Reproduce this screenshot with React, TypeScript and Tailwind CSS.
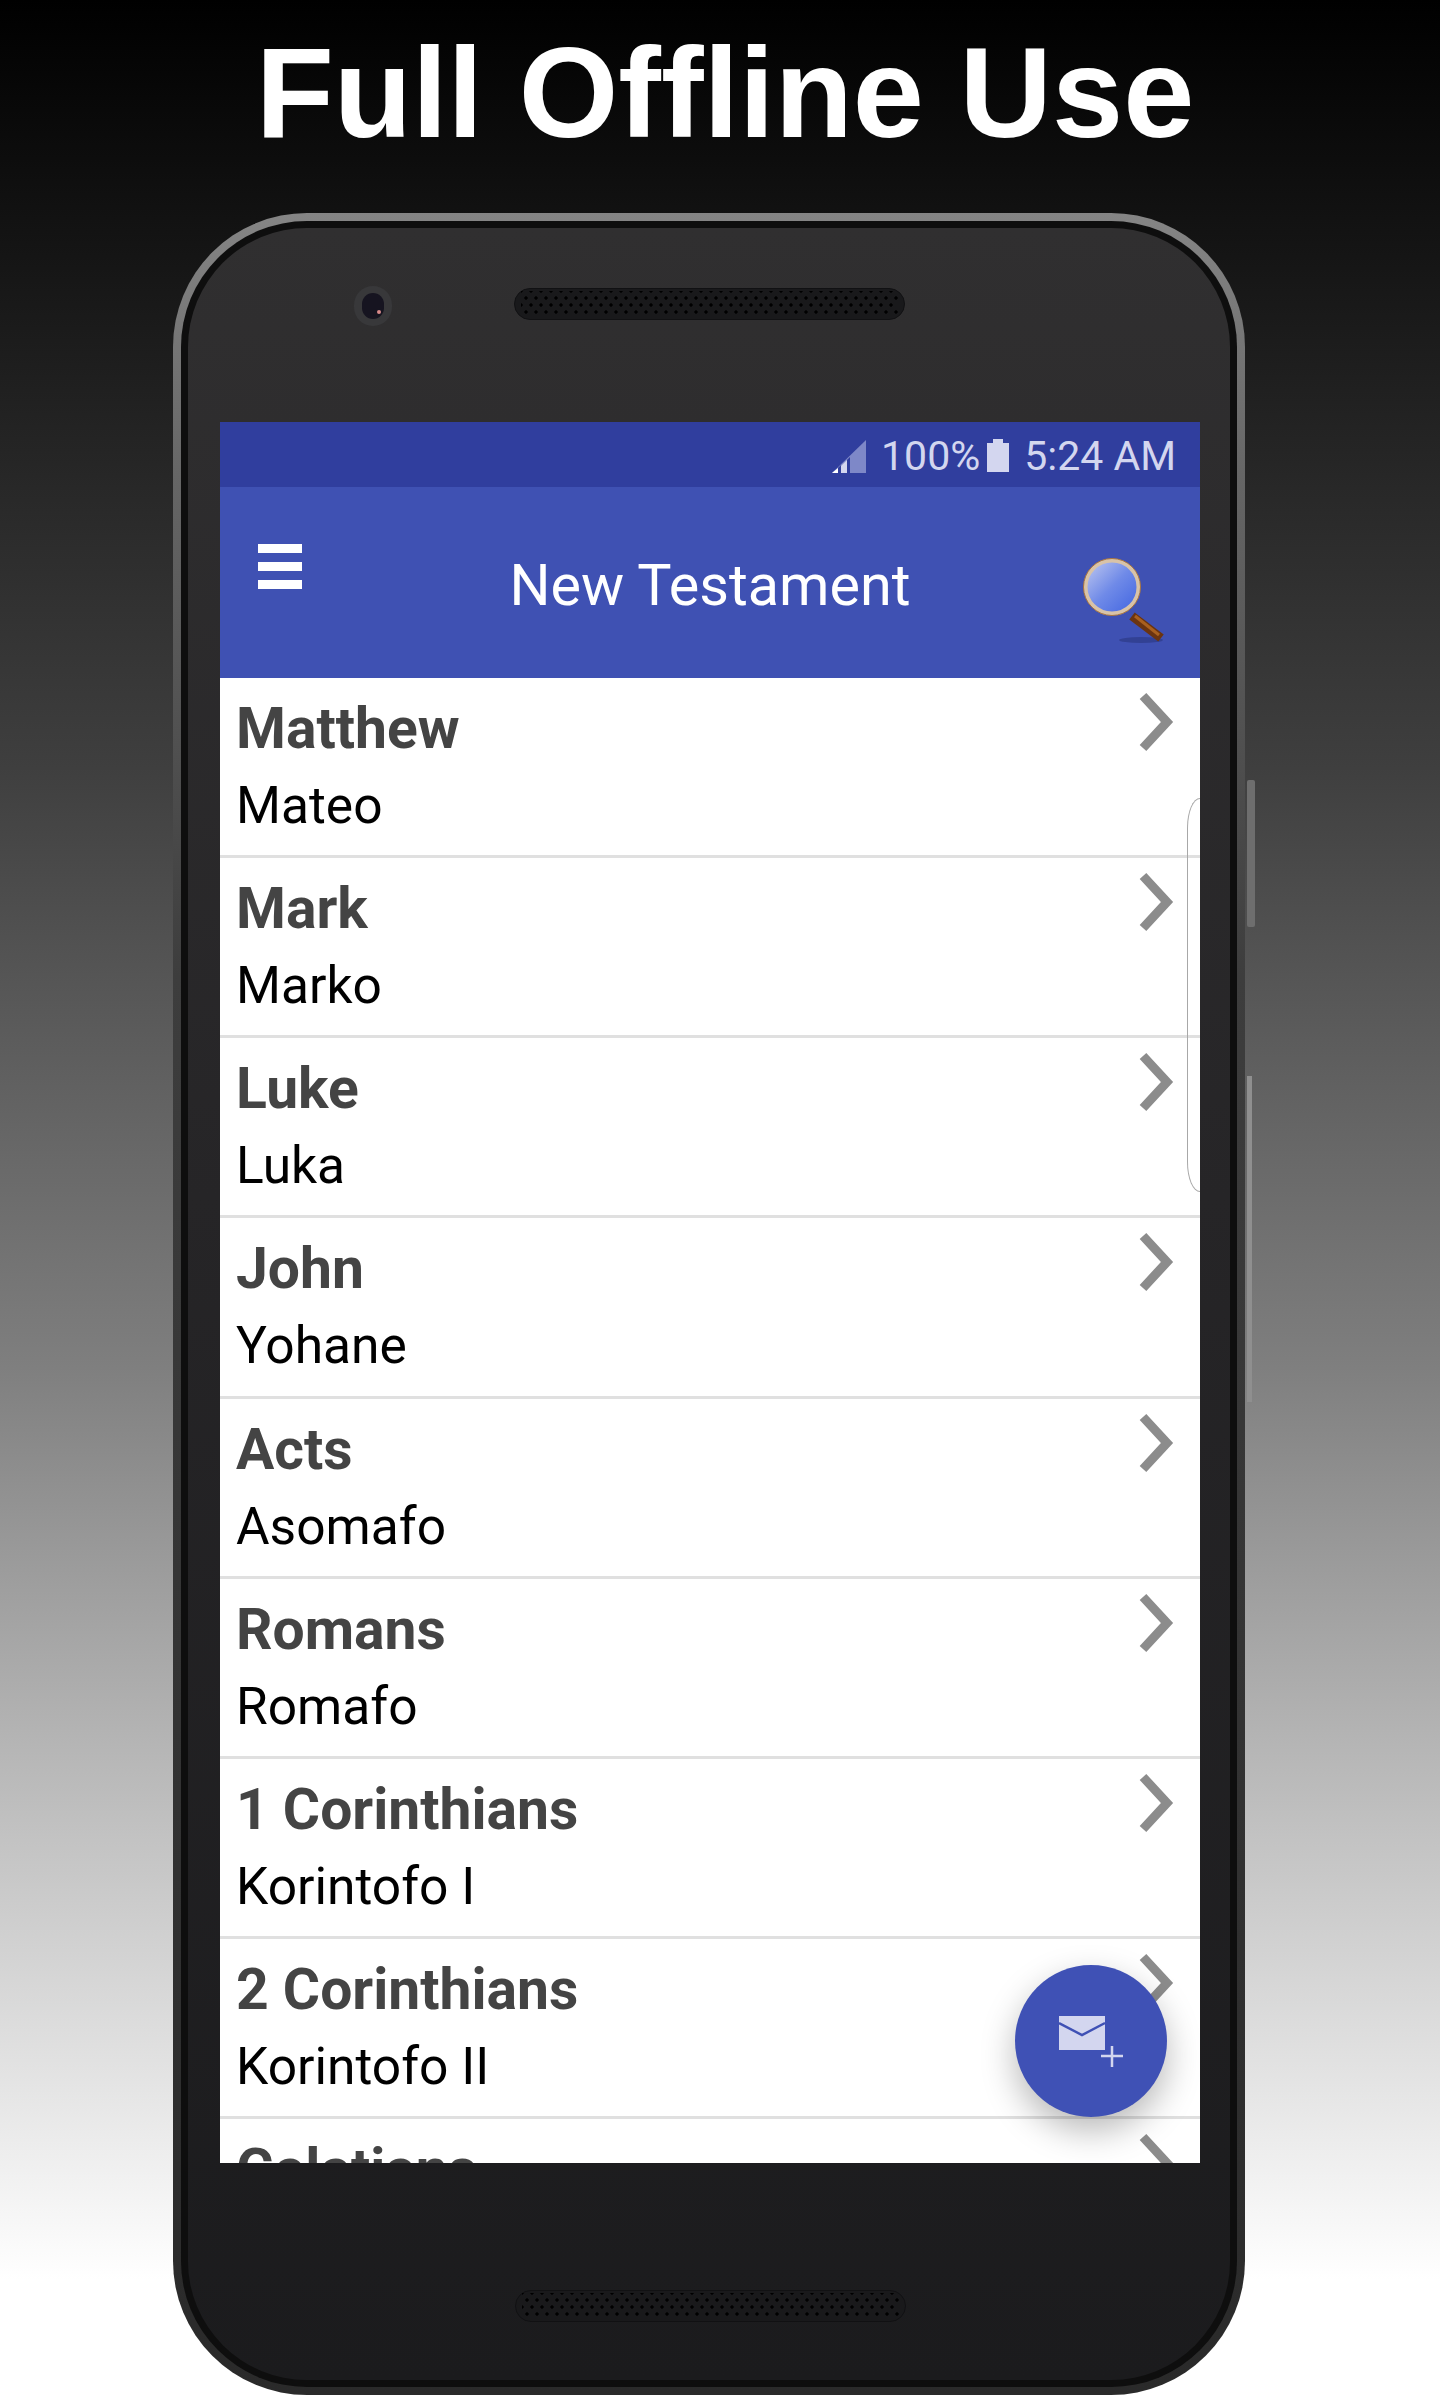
const books = [
  { en: 'Matthew', local: 'Mateo' },
  { en: 'Mark', local: 'Marko' },
  { en: 'Luke', local: 'Luka' },
  { en: 'John', local: 'Yohane' },
  { en: 'Acts', local: 'Asomafo' },
  { en: 'Romans', local: 'Romafo' },
  { en: '1 Corinthians', local: 'Korintofo I' },
  { en: '2 Corinthians', local: 'Korintofo II' },
  { en: 'Galatians', local: '' },
];

const Speaker = () => (
  <div className="w-[391px] h-[32px] rounded-full bg-[#19191b] border border-[#111113] px-[6px] py-[2px]">
    <div className="w-full h-full bg-[radial-gradient(circle,#000_1.4px,transparent_1.9px),radial-gradient(circle,#000_1.4px,transparent_1.9px)] bg-[length:10px_14px] bg-[position:0_0,5px_7px]" />
  </div>
);

const Chevron = () => (
  <svg width="36" height="60" viewBox="0 0 36 60" className="shrink-0">
    <path d="M5 4 L29 30 L5 56" fill="none" stroke="#8c8c8c" strokeWidth="9" />
  </svg>
);

const Magnifier = () => (
  <svg width="84" height="90" viewBox="0 0 84 90">
    <defs>
      <linearGradient id="lens" x1="0" y1="0" x2="1" y2="1">
        <stop offset="0" stopColor="#c3cbf0" />
        <stop offset="0.5" stopColor="#6f8ae8" />
        <stop offset="1" stopColor="#3f63e0" />
      </linearGradient>
    </defs>
    <ellipse cx="58" cy="83" rx="22" ry="3" fill="#2e3b88" opacity="0.7" />
    <path d="M49 59 L78 81" stroke="#6b3410" strokeWidth="9" />
    <path d="M52 59 L76 78" stroke="#a9601f" strokeWidth="3" />
    <circle cx="29" cy="30" r="26.5" fill="url(#lens)" stroke="#d8c3a8" strokeWidth="4" />
    <circle cx="29" cy="30" r="28.5" fill="none" stroke="#a8743f" strokeWidth="1" />
  </svg>
);

const SignalIcon = () => (
  <svg width="34" height="33" viewBox="0 0 34 33">
    <path d="M34 0 V33 H0 Z" fill="#7e88c8" />
    <path d="M9 33 H15 V20 L9 26 Z" fill="#d3d6ef" />
    <path d="M0 33 H6 V28 Z" fill="#ffffff" />
    <path d="M6 33 H9 V25 L6 28 Z" fill="#303e9e" />
    <path d="M15 33 H18 V17 L15 20 Z" fill="#303e9e" />
  </svg>
);

const BatteryIcon = () => (
  <svg width="22" height="33" viewBox="0 0 22 33">
    <path d="M6 0 H16 V4 H22 V33 H0 V4 H6 Z" fill="#d3d6ef" />
  </svg>
);

const MailPlus = () => (
  <svg width="76" height="64" viewBox="0 0 76 64">
    <path d="M0 0 H46 V34 H0 Z" fill="#d3d6ef" />
    <path d="M0 7 L23 19 L46 7" fill="none" stroke="#3f51b5" strokeWidth="2.5" />
    <path d="M53 30 V51 M42 40 H64" stroke="#d3d6ef" strokeWidth="2.5" />
  </svg>
);

export default function App() {
  return (
    <div className="w-[1440px] h-[2400px] overflow-hidden bg-[linear-gradient(180deg,#000_0%,#3f3f3f_32%,#7f7f7f_57%,#c4c4c4_77%,#fff_95%)]">
      <h1 className="h-[213px] pt-[18px] text-center text-white text-[128px] leading-[150px] font-bold font-['Liberation_Sans',sans-serif] pl-[10px]">
        Full Offline Use
      </h1>

      {/* Phone */}
      <div className="relative ml-[173px] w-[1072px] h-[2182px] rounded-[134px] p-[8px] bg-[linear-gradient(180deg,#858585_0%,#666666_12%,#3d3d3d_35%,#2a2a2a_100%)]">
        <div className="absolute left-[1074px] top-[567px] w-[8px] h-[147px] rounded-[2px] bg-[#6e6e6e]" />
        <div className="absolute left-[1074px] top-[863px] w-[5px] h-[326px] bg-[#8f8f8f]" />

        <div className="h-full rounded-[126px] bg-[#0e0e0e] p-[7px]">
          <div className="h-full rounded-[119px] bg-[linear-gradient(180deg,#302f30_0%,#262527_45%,#1b1b1d_100%)] flex flex-col pl-[32px] pr-[30px]">
            <div className="h-[194px] shrink-0 flex items-start pt-[59px]">
              <div className="ml-[134px] w-[38px] h-[40px] rounded-full bg-[#38383a] flex items-center justify-center -mt-[1px]">
                <div className="relative w-[22px] h-[26px] rounded-full bg-[#161420]">
                  <div className="absolute right-[3px] bottom-[5px] w-[4px] h-[4px] rounded-full bg-[#d98a8a]" />
                </div>
              </div>
              <div className="ml-[122px] mt-[1px]">
                <Speaker />
              </div>
            </div>

            {/* Screen */}
            <div className="relative flex-1 min-h-0 overflow-hidden bg-white flex flex-col font-['Roboto',sans-serif]">
              <div className="h-[65px] shrink-0 bg-[#303e9e] flex items-start justify-end pr-[24px] pt-[18px] text-[#d3d6ef] text-[41px] leading-[33px]">
                <SignalIcon />
                <span className="ml-[15px]">100%</span>
                <span className="ml-[7px] -mt-[1px]"><BatteryIcon /></span>
                <span className="ml-[15px]">5:24 AM</span>
              </div>

              <div className="h-[191px] shrink-0 bg-[#3f51b3] flex items-start text-white">
                <div className="w-[220px] pl-[38px] pt-[57px] flex flex-col gap-[9px]">
                  <div className="w-[44px] h-[9px] bg-white" />
                  <div className="w-[44px] h-[9px] bg-white" />
                  <div className="w-[44px] h-[9px] bg-white" />
                </div>
                <div className="flex-1 text-center text-[57.5px] leading-[68px] pt-[65px]">New Testament</div>
                <div className="w-[220px] pl-[103px] pt-[70px]">
                  <Magnifier />
                </div>
              </div>

              <div className="flex-1 min-h-0 overflow-hidden">
                {books.map((b) => (
                  <div key={b.en} className="h-[180.15px] border-b-[3px] border-[#e0e0e0] pl-[16px] pr-[26px] flex justify-between items-start">
                    <div>
                      <div className="text-[57px] leading-[68px] font-bold text-[#444444] mt-[17px]">{b.en}</div>
                      {b.local && <div className="text-[51.5px] leading-[60px] text-black mt-[13px]">{b.local}</div>}
                    </div>
                    <div className="pt-[14px]">
                      <Chevron />
                    </div>
                  </div>
                ))}
              </div>

              {/* Edge panel handle */}
              <div className="absolute right-0 top-[376px] w-[13px] h-[394px] rounded-l-[13px_30px] border-[1.5px] border-r-0 border-[#a8a8a8]" />

              {/* FAB */}
              <div className="absolute right-[33px] bottom-[46px] w-[152px] h-[152px] rounded-full bg-[#3f51b5] shadow-[0_14px_34px_rgba(0,0,0,0.28)] pl-[44px] pt-[51px]">
                <MailPlus />
              </div>
            </div>

            <div className="h-[217px] shrink-0 flex justify-center items-start pt-[127px]">
              <Speaker />
            </div>
          </div>
        </div>
      </div>
    </div>
  );
}
